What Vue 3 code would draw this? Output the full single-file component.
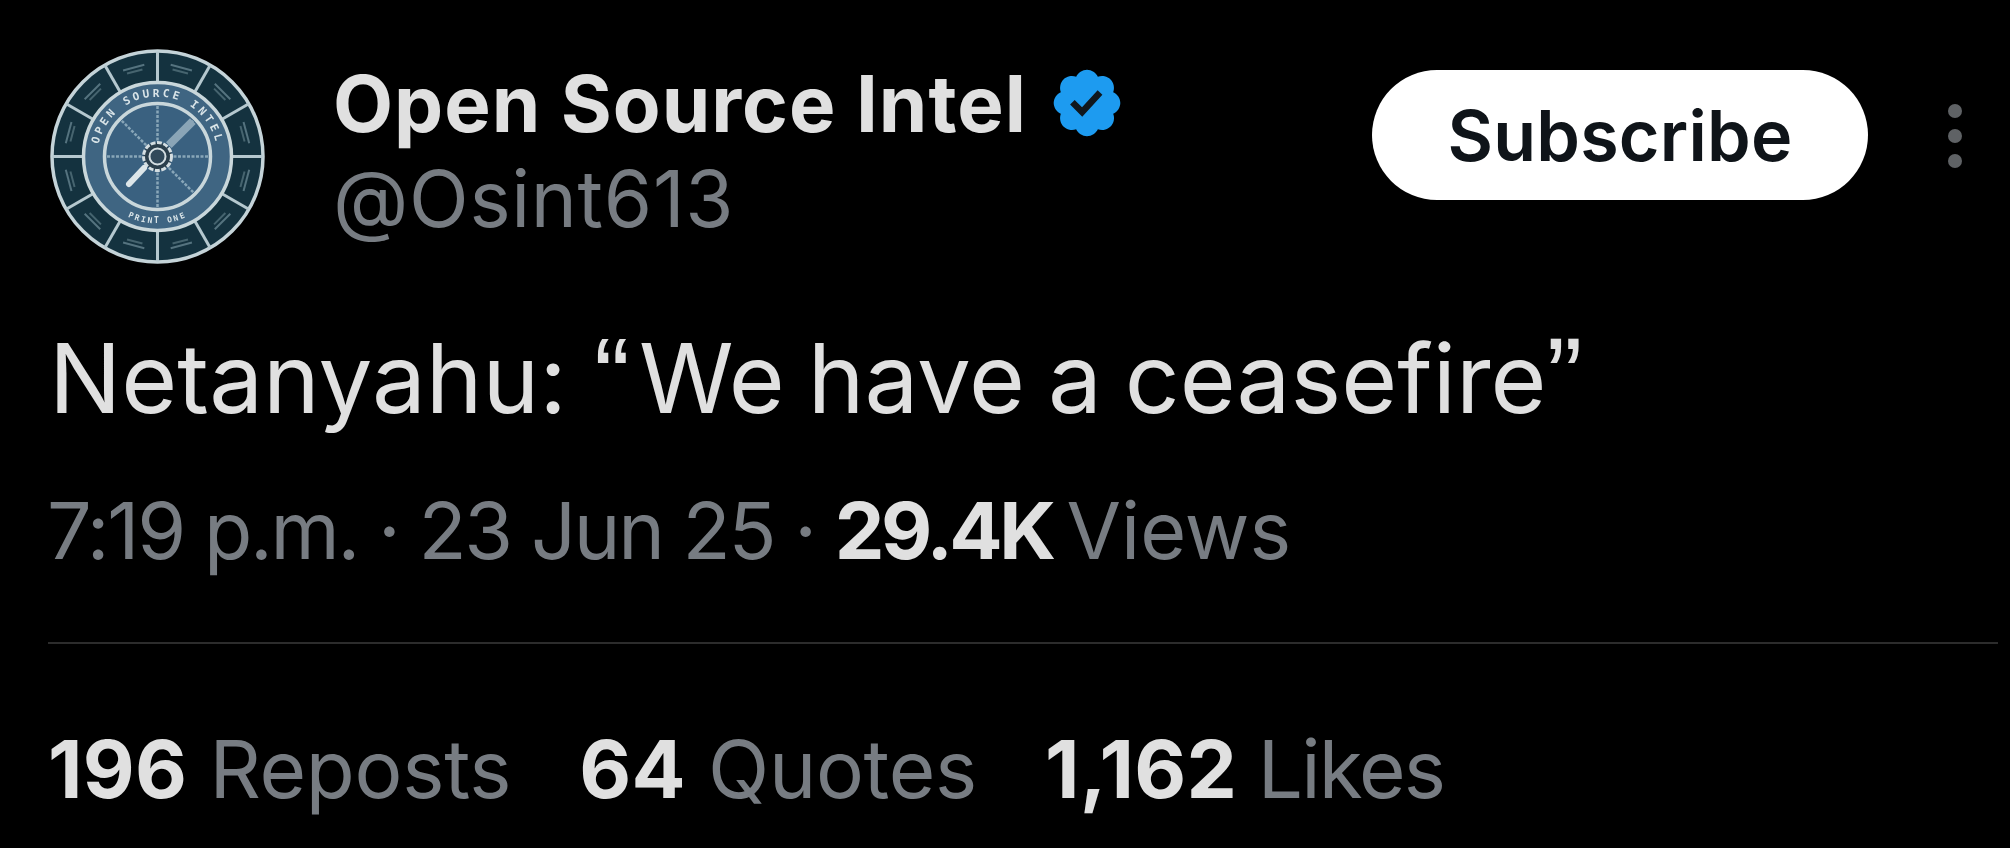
<script setup>
const C = 107.5
const polar = (r, deg) => {
  const a = (deg - 90) * Math.PI / 180
  return [C + r * Math.cos(a), C + r * Math.sin(a)]
}
const line = (r1, r2, deg) => {
  const [x1, y1] = polar(r1, deg)
  const [x2, y2] = polar(r2, deg)
  return { x1, y1, x2, y2 }
}
const outerDividers = [0, 30, 60, 90, 120, 150, 180, 210, 240, 270, 300, 330].map(d => line(74, 105, d))
const spokes = [0, 45, 90, 135, 180, 270, 315].map(d => line(16, 52, d))
const glyphs = Array.from({ length: 12 }, (_, i) => {
  const [x, y] = polar(89, i * 30 + 15)
  return { x, y, rot: i * 30 + 15 }
})
</script>

<template>
  <main class="tweet">
    <header class="head">
      <svg class="avatar" viewBox="0 0 215 215" role="img" aria-label="Open Source Intel logo">
        <circle :cx="C" :cy="C" r="105.5" fill="#14323f" stroke="#c4d3d8" stroke-width="3.5" />
        <line v-for="(l, i) in outerDividers" :key="i" v-bind="l" stroke="#b5c8cf" stroke-width="3" />
        <g v-for="(g, i) in glyphs" :key="'g' + i" :transform="`translate(${g.x} ${g.y}) rotate(${g.rot})`">
          <rect x="-11" y="-4" width="22" height="2" fill="#55737f" />
          <rect x="-8" y="0" width="16" height="2" fill="#46646f" />
        </g>
        <circle :cx="C" :cy="C" r="74" fill="#3f6582" stroke="#c9d7db" stroke-width="3.5" />
        <circle :cx="C" :cy="C" r="53" fill="#3a6180" stroke="#c9d7db" stroke-width="3.5" />
        <defs>
          <path id="ringTop" d="M 47.5 107.5 A 60 60 0 0 1 167.5 107.5" />
          <path id="ringBottom" d="M 40.5 107.5 A 67 67 0 0 0 174.5 107.5" />
        </defs>
        <text class="ring">
          <textPath href="#ringTop" startOffset="50%" text-anchor="middle">OPEN SOURCE INTEL</textPath>
        </text>
        <text class="ring small">
          <textPath href="#ringBottom" startOffset="50%" text-anchor="middle">PRINT ONE</textPath>
        </text>
        <line v-for="(l, i) in spokes" :key="'s' + i" v-bind="l" stroke="#88a6b8" stroke-width="2.5" stroke-dasharray="3 1.5" />
        <line v-bind="line(16, 50, 45)" stroke="#8aa5b7" stroke-width="8" />
        <circle :cx="C" :cy="C" r="14" fill="#2b3f4c" stroke="#d4dee2" stroke-width="3" stroke-dasharray="5 1.5" />
        <circle :cx="C" :cy="C" r="8" fill="#31495a" stroke="#d4dee2" stroke-width="2" />
        <line x1="94" y1="119" x2="79" y2="135" stroke="#dde6e9" stroke-width="6" stroke-linecap="round" />
      </svg>

      <div class="identity">
        <div class="name-row">
          <span class="name">Open Source Intel</span>
          <svg class="badge" viewBox="0 0 22 22" aria-label="Verified">
            <path fill="#1d9bf0" d="M20.396 11c-.018-.646-.215-1.275-.57-1.816-.354-.54-.852-.972-1.438-1.246.223-.607.27-1.264.14-1.897-.131-.634-.437-1.218-.882-1.687-.47-.445-1.053-.75-1.687-.882-.633-.13-1.29-.083-1.897.14-.273-.587-.704-1.086-1.245-1.44S11.647 1.62 11 1.604c-.646.017-1.273.213-1.813.568s-.969.854-1.24 1.44c-.608-.223-1.267-.272-1.902-.14-.635.13-1.22.436-1.69.882-.445.47-.749 1.055-.878 1.688-.13.633-.08 1.29.144 1.896-.587.274-1.087.705-1.443 1.245-.356.54-.555 1.17-.574 1.817.02.647.218 1.276.574 1.817.356.54.856.972 1.443 1.245-.224.606-.274 1.263-.144 1.896.13.634.433 1.218.877 1.688.47.443 1.054.747 1.687.878.633.132 1.29.084 1.897-.136.274.586.705 1.084 1.246 1.439.54.354 1.17.551 1.816.569.647-.016 1.276-.213 1.817-.567s.972-.854 1.245-1.44c.604.239 1.266.296 1.903.164.636-.132 1.22-.447 1.68-.907.46-.46.776-1.044.908-1.681s.075-1.299-.165-1.903c.586-.274 1.084-.705 1.439-1.246.354-.54.551-1.17.569-1.816z" />
            <path fill="#10171d" d="M9.662 14.85l-3.429-3.428 1.293-1.302 2.072 2.072 4.4-4.794 1.347 1.246z" />
          </svg>
        </div>
        <div class="handle">@Osint613</div>
      </div>

      <button class="subscribe" type="button">Subscribe</button>

      <div class="more" aria-label="More">
        <span></span><span></span><span></span>
      </div>
    </header>

    <p class="body">Netanyahu: <span class="q open">“</span>We have a ceasefire<span class="q">”</span></p>

    <p class="meta">7:19 p.m. · 23 Jun 25 · <b>29.4K</b> <span class="views">Views</span></p>

    <hr class="rule" />

    <footer class="stats">
      <span class="stat"><b>196</b> Reposts</span>
      <span class="stat"><b>64</b> Quotes</span>
      <span class="stat likes"><b>1,162</b> Likes</span>
    </footer>
  </main>
</template>

<style scoped>
.tweet {
  box-sizing: border-box;
  width: 2010px;
  height: 848px;
  padding: 49px 12px 0 48px;
  background: #000;
  font-family: Inter, "Liberation Sans", sans-serif;
  overflow: hidden;
}
.head {
  display: flex;
  align-items: flex-start;
  padding-right: 36px;
}
.avatar {
  flex: none;
  width: 215px;
  height: 215px;
  margin-left: 2px;
  filter: blur(0.6px);
}
.identity {
  flex: 1;
  margin-left: 68px;
  margin-top: 9px;
}
.name-row {
  display: flex;
  align-items: center;
  gap: 21px;
  height: 90px;
}
.name {
  font-size: 78px;
  font-weight: 700;
  color: #e0e0e0;
  letter-spacing: 1px;
  white-space: nowrap;
}
.badge {
  width: 78px;
  height: 78px;
  flex: none;
}
.handle {
  margin-top: 8px;
  font-size: 78px;
  line-height: 86px;
  color: #777c82;
  letter-spacing: 0.7px;
}
.subscribe {
  flex: none;
  width: 496px;
  height: 130px;
  margin-top: 21px;
  border: 0;
  border-radius: 65px;
  background: #fff;
  color: #0f1419;
  font: 600 70px Inter, "Liberation Sans", sans-serif;
  letter-spacing: 0.2px;
  padding: 0;
}
.more {
  flex: none;
  display: flex;
  flex-direction: column;
  gap: 11px;
  margin: 55px 0 0 80px;
}
.more span {
  width: 14px;
  height: 14px;
  border-radius: 50%;
  background: #5f6265;
}
.body {
  margin: 57px 0 0 1px;
  font-size: 96px;
  line-height: 110px;
  color: #e0e0e0;
  word-spacing: -4px;
}
.q {
  font-family: "Liberation Sans", sans-serif;
  font-size: 108px;
}
.q.open {
  margin-left: 4px;
  margin-right: 9px;
}
.meta {
  margin: 53px 0 0 -1px;
  font-size: 79px;
  line-height: 88px;
  color: #777c82;
  letter-spacing: -2.25px;
}
.meta b {
  color: #e0e0e0;
  font-weight: 700;
  letter-spacing: -3.5px;
}
.views {
  margin-left: -6px;
  letter-spacing: 0;
}
.rule {
  margin: 68px 0 0;
  border: 0;
  height: 2px;
  background: #2c2c2c;
}
.stats {
  display: flex;
  gap: 68px;
  margin-top: 81px;
  font-size: 80px;
  line-height: 88px;
  color: #777c82;
  letter-spacing: -0.3px;
}
.stat b {
  color: #e0e0e0;
  font-weight: 700;
  letter-spacing: 0.3px;
}
.likes {
  letter-spacing: -1.9px;
}
.ring {
  font: 700 11px "DejaVu Sans Mono", monospace;
  fill: #d9e4e8;
  letter-spacing: 3px;
}
.ring.small {
  font-size: 8px;
  letter-spacing: 2px;
}
</style>

<style>
html, body { background: #000; }
</style>
